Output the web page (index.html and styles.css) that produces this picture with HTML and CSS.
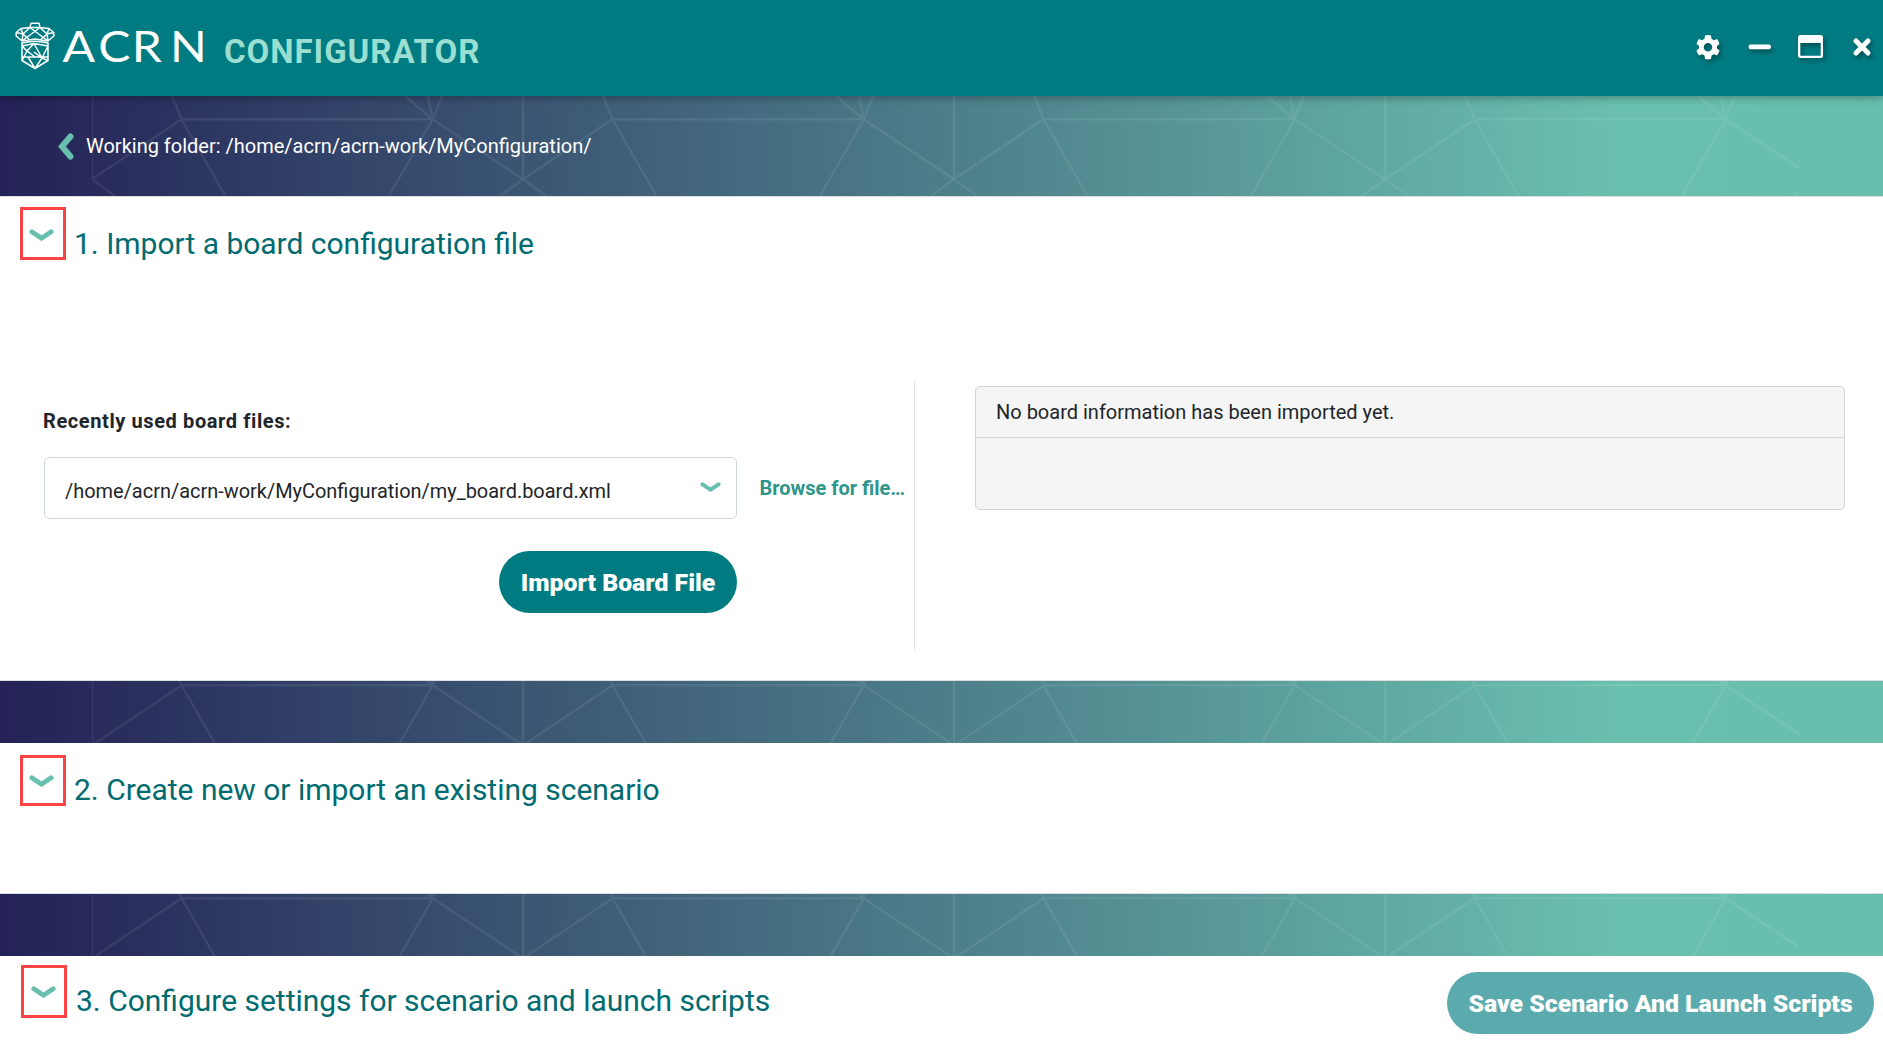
FILE: index.html
```html
<!DOCTYPE html>
<html lang="en">
<head>
<meta charset="utf-8">
<title>ACRN Configurator</title>
<link rel="stylesheet" href="styles.css">
</head>
<body>
<svg class="defs" width="0" height="0" aria-hidden="true">
  <defs>
    <symbol id="chevron" viewBox="0 0 25 12"><path d="M2.800 2.800 12.500 9.200 22.200 2.800" fill="none" stroke="currentColor" stroke-width="4.800" stroke-linecap="round"/></symbol>
    <g id="facet">
      <path d="M0-60V33.300M0 33.300 89.600-26.700M89.600-26.700 80-50M89.600-26.700 133.500 50M89.600-26.700H340.700M340.700-26.700 297 50M340.700-26.700 313-50M340.700-26.700 336-50M340.700-26.700 350-50M340.700-26.700 431 33.300M0 33.300 23 50M431 33.300 408 50"/>
    </g>
    <clipPath id="facet-clip"><rect x="92" y="-50" width="1706.500" height="100"/></clipPath>
    <g id="facets" fill="none" stroke="#fff" stroke-opacity=".08" stroke-width="2.400" clip-path="url(#facet-clip)">
      <use href="#facet" x="92"/><use href="#facet" x="523"/><use href="#facet" x="954"/><use href="#facet" x="1385"/>
    </g>
  </defs>
</svg>

<header class="titlebar">
  <div class="brand">
    <svg class="acorn" viewBox="0 0 40 48" fill="none" stroke="#fff" stroke-width="1.500" stroke-linejoin="round">
      <path d="M15 5.500 16 1.200H24L25 5.500M15 5.500H25M15 5.500 6 6.500 1.200 10.500V14L7 19 20 17 33 19 38.800 14V10.500L34 6.500 25 5.500M6 6.500 8 12 7 19M8 12 15 5.500 27 14.500 33 19M8 12 1.200 10.500M8 12 14 17.500M34 6.500 32 12 33 19M32 12 25 5.500 13 14.500 7 19M32 12 38.800 10.500M32 12 26 17.500"/>
      <path d="M7 21Q20 17.500 33 21V38.500L20 46.500 7 38.500ZM7 24 19 21.500 12 29 20 35H7M12 29 7 24M19 21.500 33 24 27 36 19 30M19 21.500 27 36M20 35H33M12 29 7 38.500 20 46.500 13 35M27 36 20 46.500M27 36 33 38.500"/>
    </svg>
    <svg class="wordmark" viewBox="0 0 146 40"><text class="wordmark-text" transform="scale(1.120 1)" x="-.5 31.500 61.500 95.500" y="35">ACRN</text></svg>
    <h1 class="product">CONFIGURATOR</h1>
  </div>
  <div class="window-controls">
    <svg class="control gear" viewBox="0 0 24 26"><path fill="#fff" fill-rule="evenodd" d="M9 1.500Q12 .5 15 1.500L15.500 4.800 18 6.200 21 5Q23.300 7.300 23.500 10L21 12V14.500L23.500 16.500Q22.800 19.500 21 21.500L18 20.200 15.500 21.600 15 25Q12 25.800 9 25L8.500 21.600 6 20.200 3 21.500Q1.200 19.500.5 16.500L3 14.500V12L.5 10Q1.200 7 3 5L6 6.200 8.500 4.800ZM12 9A4.200 4.200 0 1 0 12 17.400 4.200 4.200 0 1 0 12 9Z"/></svg>
    <svg class="control minimize" viewBox="0 0 24 6"><rect x=".5" y=".5" width="22.500" height="4.800" rx="2.200" fill="#fff"/></svg>
    <svg class="control maximize" viewBox="0 0 25 23"><path fill="#fff" fill-rule="evenodd" d="M2.500 0H22.500Q25 0 25 2.500V20.500Q25 23 22.500 23H2.500Q0 23 0 20.500V2.500Q0 0 2.500 0ZM2.300 8V20.200Q2.300 20.700 2.800 20.700H22.200Q22.700 20.700 22.700 20.200V8Z"/></svg>
    <svg class="control close" viewBox="0 0 18 18"><path d="M3 3 15 15M15 3 3 15" stroke="#fff" stroke-width="5" stroke-linecap="round"/></svg>
  </div>
</header>

<div class="banner folder-banner">
  <svg class="facets" viewBox="0 -50 1883 100"><use href="#facets"/></svg>
  <div class="folder">
    <svg class="back" viewBox="0 0 16 27"><path d="M12.500 3.500 4 13.500 12.500 23.500" fill="none" stroke="#69bfad" stroke-width="6" stroke-linecap="round"/></svg>
    <span class="folder-path">Working folder: /home/acrn/acrn-work/MyConfiguration/</span>
  </div>
</div>

<section class="step step-board">
  <div class="step-head">
    <button class="toggle"><svg class="chevron"><use href="#chevron"/></svg></button>
    <h2 class="step-title">1. Import a board configuration file</h2>
  </div>
  <div class="board">
    <div class="board-form">
      <label class="field-label">Recently used board files:</label>
      <div class="file-row">
        <div class="select"><span>/home/acrn/acrn-work/MyConfiguration/my_board.board.xml</span><svg class="select-chevron"><use href="#chevron"/></svg></div>
        <a class="browse">Browse for file…</a>
      </div>
      <button class="button import">Import Board File</button>
    </div>
    <div class="board-info">
      <div class="card">
        <div class="card-head">No board information has been imported yet.</div>
      </div>
    </div>
  </div>
</section>

<div class="banner">
  <svg class="facets" viewBox="0 -31 1883 62"><use href="#facets"/></svg>
</div>

<section class="step step-scenario">
  <div class="step-head">
    <button class="toggle"><svg class="chevron"><use href="#chevron"/></svg></button>
    <h2 class="step-title">2. Create new or import an existing scenario</h2>
  </div>
</section>

<div class="banner">
  <svg class="facets" viewBox="0 -31 1883 62"><use href="#facets"/></svg>
</div>

<section class="step step-settings">
  <div class="step-head">
    <button class="toggle"><svg class="chevron"><use href="#chevron"/></svg></button>
    <h2 class="step-title">3. Configure settings for scenario and launch scripts</h2>
  </div>
  <button class="button save">Save Scenario And Launch Scripts</button>
</section>
</body>
</html>
```
FILE: styles.css
```css
* { box-sizing: border-box; }

body {
  margin: 0;
  height: 1060px;
  overflow: hidden;
  background: #fff;
  color: #212529;
  font-family: Roboto, "Liberation Sans", sans-serif;
  font-size: 20px;
}

svg { display: block; }
.defs { position: absolute; }
button { border: 0; padding: 0; background: none; font: inherit; }

/* Title bar */
.titlebar {
  position: relative;
  z-index: 1;
  display: flex;
  justify-content: space-between;
  height: 96px;
  padding: 0 11px 0 15px;
  background: #007b81;
  box-shadow: 0 2px 8px rgba(0, 0, 0, .3);
}
.brand { display: flex; align-items: flex-start; }
.acorn { width: 40px; height: 48px; margin-top: 22px; }
.wordmark { width: 146px; height: 40px; margin: 27px 0 0 8px; overflow: visible; }
.wordmark-text { font: 400 43px Lato, "Liberation Sans", sans-serif; fill: #fff; }
.product {
  margin: 32px 0 0 15px;
  color: #9adfd1;
  font-size: 33px;
  font-weight: 700;
  line-height: 39px;
  letter-spacing: .95px;
}
.window-controls { display: flex; align-items: center; height: 93px; }
.control { overflow: visible; filter: drop-shadow(2px 3px 2px rgba(0, 0, 0, .35)); }
.gear { width: 24px; height: 26px; margin-right: 28px; }
.minimize { width: 24px; height: 6px; margin-right: 26px; }
.maximize { width: 25px; height: 23px; margin-right: 30px; }
.close { width: 18px; height: 18px; margin-right: 1px; }

/* Patterned gradient strips */
.banner {
  display: grid;
  height: 62px;
  background: linear-gradient(90deg, #242256, #6ac0af 86%, #68bfae);
}
.banner > * { grid-area: 1 / 1; }
.facets { width: 100%; height: 100%; }
.folder-banner { height: 100px; }
.folder { display: flex; align-items: flex-start; padding: 37px 0 0 58px; color: #fff; }
.back { width: 16px; height: 27px; margin-right: 12px; }
.folder-path { line-height: 26px; }

/* Steps */
.step-head { display: flex; align-items: flex-start; }
.toggle {
  display: grid;
  place-items: center;
  width: 46px;
  height: 53px;
  padding-right: 3px;
  border: 3px solid #fd4444;
  color: #69bfad;
}
.chevron { width: 25px; height: 12px; }
.step-title {
  margin: 0 0 0 8px;
  color: #006b70;
  font-size: 29.970px;
  font-weight: 400;
  line-height: 36px;
}
.step-board { height: 485px; padding: 10px 0 0 20px; border-top: 1px solid #dcdfe0; border-bottom: 1px solid #dcdfe0; }
.step-board .step-title { margin-top: 19px; }
.step-board .chevron { margin-top: 2px; }
.step-scenario { height: 151px; padding: 12px 0 0 20px; border-bottom: 1px solid #dcdfe0; }
.step-scenario .toggle { height: 51px; }
.step-scenario .step-title { margin-top: 17px; }
.step-settings { display: flex; justify-content: space-between; padding: 9px 9px 0 21px; }
.step-settings .toggle { padding-right: 1px; }
.step-settings .step-title { margin: 18px 0 0 9px; }

/* Board import */
.board { display: flex; margin-top: 119px; height: 269px; }
.board-form { width: 895px; padding: 26px 0 0 23px; border-right: 1px solid #dee2e6; }
.field-label { display: block; font-weight: 700; line-height: 28px; letter-spacing: .6px; }
.file-row { display: flex; align-items: center; margin: 22px 0 32px 1px; }
.select {
  display: flex;
  align-items: center;
  justify-content: space-between;
  width: 693px;
  height: 62px;
  padding: 5px 15px 0 20px;
  border: 1px solid #ced4da;
  border-radius: 5px;
  font-size: 19.950px;
}
.select-chevron { width: 21px; height: 10px; margin-top: -7px; color: #69bfad; }
.browse { margin-left: 22.500px; color: #2d9589; font-weight: 700; }
.button {
  display: grid;
  place-items: center;
  height: 62px;
  padding-top: 1px;
  border-radius: 31px;
  background: #007b81;
  color: #fff;
  font-size: 24.800px;
  font-weight: 900;
}
.import { width: 238px; margin-left: 456px; }
.board-info { flex: 1; padding: 5px 38px 0 60px; }
.card { height: 124px; border: 1px solid #d3d5d6; border-radius: 5px; background: #f5f5f5; }
.card-head { height: 51px; padding-left: 20px; border-bottom: 1px solid #d3d5d6; line-height: 50px; }
.save { width: 427px; margin-top: 7px; background: #5baaae; }
```
